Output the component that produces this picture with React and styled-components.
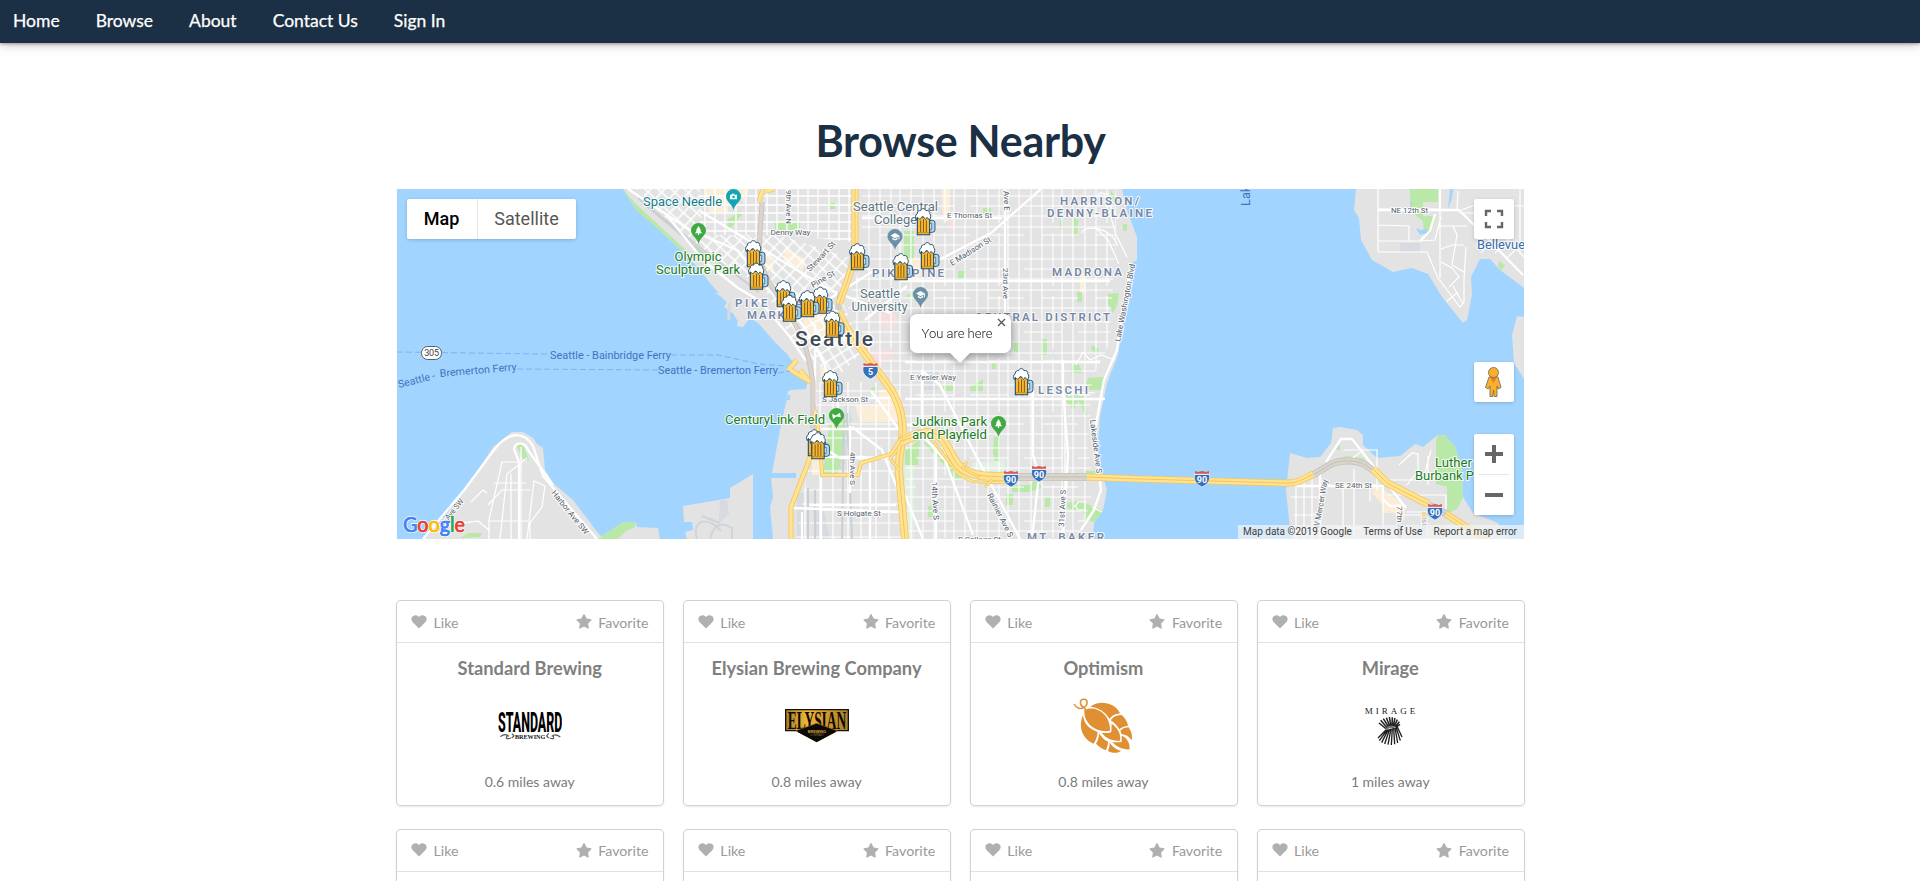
import React from "react";
import styled, { createGlobalStyle } from "styled-components";

const GlobalStyle = createGlobalStyle`
  * { box-sizing: border-box; }
  html, body { margin: 0; height: 881px; overflow: hidden; }
  body { background: #fff; font-family: Lato, "Liberation Sans", sans-serif; }
`;

const Nav = styled.nav`
  display: flex;
  align-items: center;
  gap: 36px;
  height: 43px;
  padding: 0 13px 2px;
  background: #1b3045;
  box-shadow: 0 1px 3px rgba(60, 20, 30, 0.4), 0 3px 10px rgba(0, 0, 0, 0.16);
`;
const NavLink = styled.a`
  color: #fff;
  font-size: 17.5px;
  line-height: 24px;
  white-space: nowrap;
  -webkit-text-stroke: 0.25px #fff;
`;
const Main = styled.main`
  width: 1127px;
  margin: 0 0 0 397px;
  padding-top: 70px;
`;
const Heading = styled.h1`
  margin: 0;
  height: 76px;
  color: #1b3045;
  font-size: 43px;
  line-height: 56px;
  font-weight: 700;
  letter-spacing: -0.3px;
  text-align: center;
`;
const MapFrame = styled.section`
  position: relative;
  height: 350px;
  overflow: hidden;
  font-family: Roboto, sans-serif;
  background: #a1d4ff;
`;
const MapSvg = styled.svg`
  display: block;
  font-family: Roboto, sans-serif;
`;
const TypeSwitch = styled.div`
  position: absolute;
  left: 10px;
  top: 10px;
  display: flex;
  height: 40px;
  border-radius: 2px;
  background: #fff;
  box-shadow: 0 1px 4px -1px rgba(0, 0, 0, 0.3);
`;
const TypeButton = styled.div`
  width: ${(p) => p.$width}px;
  padding-right: 1px;
  line-height: 40px;
  text-align: center;
  font-size: 18px;
  font-weight: ${(p) => (p.$active ? 500 : 400)};
  color: ${(p) => (p.$active ? "#000" : "#565656")};
  & + & { border-left: 1px solid #e6e6e6; }
`;
const Control = styled.div`
  position: absolute;
  right: 10px;
  top: ${(p) => p.$top}px;
  width: 40px;
  height: ${(p) => p.$height || 40}px;
  background: #fff;
  border-radius: 2px;
  box-shadow: 0 1px 4px -1px rgba(0, 0, 0, 0.3);
  svg { display: block; }
`;
const Attribution = styled.div`
  position: absolute;
  right: 0;
  bottom: 0;
  display: flex;
  justify-content: space-between;
  width: 286px;
  height: 14px;
  padding: 0 7px 0 5px;
  background: rgba(240, 243, 245, 0.75);
  color: #3f3f3f;
  font-size: 10px;
  line-height: 14px;
  white-space: nowrap;
`;
const InfoWindow = styled.div`
  position: absolute;
  left: 513px;
  top: 125px;
  width: 101px;
  height: 39px;
  padding-left: 11.5px;
  border-radius: 7px;
  background: #fff;
  color: #222;
  font-size: 13px;
  font-weight: 300;
  line-height: 39px;
  filter: drop-shadow(0 2px 4px rgba(0, 0, 0, 0.4));
  &::after {
    content: "";
    position: absolute;
    left: 39px;
    top: 38px;
    border: 11px solid transparent;
    border-bottom: 0;
    border-top-color: #fff;
  }
`;
const CloseIcon = styled.svg`
  position: absolute;
  right: 5px;
  top: 4px;
`;
const CardGrid = styled.section`
  display: grid;
  grid-template-columns: repeat(4, 1fr);
  gap: 24.5px 20.4px;
  margin-top: 62px;
`;
const Card = styled.article`
  height: 204px;
  border-radius: 4px;
  background: #fff;
  box-shadow: 0 1px 3px 0 #d4d4d5, 0 0 0 1px #d0d0d1;
`;
const CardHeader = styled.header`
  display: flex;
  justify-content: space-between;
  align-items: center;
  height: 42px;
  padding: 2px 15px 0 14px;
  border-bottom: 1px solid #e1e1e1;
`;
const Action = styled.span`
  display: flex;
  align-items: center;
  gap: 6.5px;
  color: #999;
  font-size: 14.2px;
  line-height: 20px;
  svg { display: block; margin-top: -2px; fill: #b0b0b0; }
`;
const CardBody = styled.div`
  display: flex;
  flex-direction: column;
  align-items: center;
  padding: 13px 1px 0 0;
`;
const CardTitle = styled.h2`
  margin: 0;
  color: #7f7f7f;
  font-size: 18.3px;
  line-height: 24px;
  font-weight: 700;
`;
const LogoSvg = styled.svg`
  display: block;
  margin: 14px 0;
`;
const Distance = styled.p`
  margin: 0;
  color: #7b7b7b;
  font-size: 14px;
  line-height: 20px;
`;

/* ---------- Map geometry ---------- */

const land = {
  seattle:
    "M623 189L637 208L663 233L683 252L700 270L710 283L727 303L723 297L727 303L737 320L750 318L758 323L773 340L787 354L793 362L787 370L808 381L806 389L790 390L790 400L786 402L780 430L772 473L796 473V478H771L773 497L770 507L773 539H1093L1094 523L1103 510L1107 490L1102 473L1097 453L1100 417L1107 383L1118 355L1123 323L1130 293L1132 263L1137 260V237L1127 210L1122 189Z",
  waterfront: "M711 281L726 287L723 293H715L728 301L724 307L738 317L737 326L743 327L750 318Z M788 391H803V395H787V400H803V408H786Z",
  harborIsland: "M753 474V539H687L685 532L693 530L692 522H684L683 506L730 498V488Z",
  harbor: "M598 539L623 522H635L637 527L658 528L660 539Z",
  westSeattle:
    "M422 539L440 523L467 487L493 447L512 432H523L533 438L537 444L543 448L545 470L553 483L573 500L598 533L604 539Z",
  bellevue:
    "M1356 189L1354 210L1359 218L1361 240L1372 260L1393 272L1412 268L1428 274L1442 297L1463 323L1467 320L1472 295L1471 277L1480 259H1490L1500 270L1524 288V189Z",
  eastShore: "M1524 317L1517 316L1512 335L1514 363L1524 379Z",
  mercer:
    "M1291 539L1286 490L1290 453L1307 458L1320 457L1331 443L1333 428L1340 427L1357 430L1363 435V445L1377 458L1400 456L1415 444L1423 447L1438 435H1445L1455 447L1462 470L1463 497L1473 513L1498 523L1508 539Z",
};

const parks = [
  "M622 189L637 205L664 230L689 253L682 251L661 232L636 210Z",
  "M689 241L710 256L704 257L692 248Z", "M728 219L740 211L742 214L731 228H727Z",
  "M775 222H800V228L786 233H775Z", "M829 203H835V209H829Z", "M904 231H914V259H904Z",
  "M829 425L847 420L844 450L838 473H823L826 450Z", "M871 388L875 387L878 391H871Z",
  "M983 208H991V213H983Z", "M1060 220H1063V229H1060Z", "M1073 218L1078 220L1077 237L1074 235Z",
  "M1110 190L1121 203L1112 200Z", "M1123 224H1127V231H1123Z", "M958 271H966L963 279H958Z",
  "M1077 292H1082V302H1077Z", "M1108 294L1119 293L1117 305L1113 313L1108 304Z",
  "M1014 341H1020V353H1014Z", "M1041 339H1047V355H1041Z", "M1092 345L1099 349L1097 355L1091 349Z",
  "M907 295L915 290L912 297H907Z", "M943 385H953V391H943Z", "M970 387L983 379V391H970Z",
  "M992 362H996V369H992Z", "M1072 366L1078 363L1083 373H1071Z", "M1088 378L1104 377V390H1090L1085 386Z",
  "M1064 395L1084 396L1087 418L1078 400L1074 410L1065 400Z", "M994 437H1000V461H995L993 453Z",
  "M905 451L920 439L918 465H905Z", "M922 441L935 447L946 462L965 479H955L942 463Z",
  "M1006 494H1013V505H1006Z", "M1012 485H1029L1036 480L1043 488L1028 492H1012Z",
  "M1045 497H1050V507H1045Z", "M1067 503L1081 501L1103 511L1094 522L1087 520L1083 512L1067 508Z",
  "M928 506L933 505V517H928Z", "M1085 471H1102V475H1085Z",
  "M598 539L623 522H635V527L626 531L618 539Z", "M516 445L523 444L529 460L523 459Z",
  "M460 538L469 533H482L480 537Z",
  "M1410 189H1438V202H1423V216H1435V221L1430 234L1424 233L1423 221L1410 211Z",
  "M1499 261L1505 265L1501 271L1498 266Z", "M1337 447L1340 444V450H1336Z",
  "M1332 462L1345 456L1363 458L1370 466L1361 462L1346 460Z",
  "M1436 440L1438 435H1445L1455 447L1462 470L1463 497L1458 508L1447 514V487L1436 484Z",
  "M1319 504L1323 502V508L1318 515Z",
];

const paleParks = ["M904 463H914V487L905 495Z", "M907 490L914 482V539H907Z", "M972 463L1005 460L1004 471H976Z", "M1445 524L1468 525L1486 539H1449Z"];

const beige = [
  "M705 189H730L728 212H709Z", "M738 189H749L744 204Z", "M785 248L805 259L803 271L784 260Z",
  "M759 243L770 253L775 275L765 266Z", "M787 281L799 297L794 305L786 296Z", "M802 318L827 312L840 327L836 344L812 348Z",
  "M855 405H879V390H900V422H860Z", "M820 365L835 372V384H821Z", "M902 254L922 259L920 281L905 280Z",
  "M812 452H819V475H812Z", "M1374 483L1392 496L1406 505L1404 521L1393 513L1382 513L1383 505L1372 493Z",
  "M942 189H950V221H943Z", "M1080 273H1085V293H1080Z",
];
const pink = ["M865 350H891L893 357L880 365H870Z", "M876 315L892 307L900 324L884 330Z", "M949 219H955V230H949Z"];
const gray = [
  "M846 398L852 420L848 455L842 470H838Z M797 493H804V539H797Z M813 507H823L830 539H817Z",
  "M728 304L731 302L730 320H727Z M720 500H727L729 514L719 523Z", "M1400 243H1420V252H1400Z", "M924 372H938V390H924Z",
];

const eastRegion = "M862 189H1116L1116 240L1112 300L1109 345L1092 378L1088 452L1094 486L1080 539H907L905 440L890 386L862 345L847 305L862 260Z";
const nwRegion = "M700 189H853V242L815 238L780 235H700Z";
const diagonalRegion = "M637 189H700L702 235H780L850 258L840 292L798 316L762 286L690 244Z";
const downtownRegion = "M763 286L798 316L840 297L864 350L835 380L807 354L790 337Z";
const southRegion = "M814 382H888L898 440L902 539H796L808 466Z";

const minorRoads = [
  "M489 539V520L502 462H520M500 539L507 474L527 458M511 539V474M521 539V447M527 539L534 481L545 486L542 507L530 523V539M488 505L502 490H530M494 483H526M488 521H528M471 502L483 490L487 493M430 528L478 521L490 531",
  "M1378 189V252M1378 209H1438M1378 225L1409 226V241H1378M1378 241H1420L1435 240L1441 217M1378 252H1427L1438 278L1460 307L1464 302V280L1466 247M1440 226H1467M1440 189V278M1453 226L1457 235L1452 265L1464 272M1441 249L1452 245H1464M1441 262L1452 268L1459 277L1449 287M1447 301L1457 293L1463 304M1457 293L1453 286M1458 191L1457 209L1461 213H1475L1498 227L1505 237L1513 245L1524 257M1461 210L1475 205L1524 206M1481 253L1499 230M1495 253L1514 234M1508 257L1524 241M1520 254V189",
  "M1296 484V539M1304 482V539M1312 480V539M1320 485V539M1343 484V539M1354 469V539M1291 497H1320M1294 515H1321M1297 529H1321M1344 450H1377V490M1348 462L1363 450M1370 488V501M1383 495V539M1399 465L1412 453L1418 454V480H1387M1407 485L1417 472M1423 480L1431 450M1428 485V456M1388 495H1446V512H1407M1400 515H1425V539M1337 528H1379",
  "M1082 233C1082 225 1110 225 1118 246M1095 227L1108 240L1119 264M1109 210L1116 235L1127 257M1103 193L1118 219M1087 207L1100 193L1109 194M1076 365L1083 352L1090 360L1101 355L1115 360M1075 507L1078 502H1085V510H1078L1074 505M1092 507L1102 512M1065 387V520M1068 396L1078 392L1095 393",
];

const mainRoads = [
  "M423 539L465 489L494 450C508 431 524 431 533 446L543 476L597 539M519 539V462L514 449C516 441 525 442 528 450L553 485",
  "M1378 210H1459L1484 235L1523 275M1440 189V211M1435 214L1430 231L1420 241M1326 462L1341 439H1352L1374 467L1385 481L1406 508M1320 470V539M1297 486H1383V499L1390 506H1404",
  "M1005 189V345M991 233L1041 189M900 280L991 233M865 320L907 286M862 218H1002M900 281H1110M922 370V435L945 460L973 535M921 370L940 385L973 450L1020 539M905 399H1105M905 495L923 539M1033 385V455L1039 475L1032 539M1063 360V390L1068 455L1063 539M1081 530L1094 510L1101 490L1099 474L1095 430L1104 380L1117 350L1124 300L1132 265M905 362H1100M936 446V539M907 425H924",
  "M812 441L840 458H889M807 457H866M852 427L882 450L898 490M871 391L898 428M700 211L830 290L890 313M799 318L875 270M815 324V405M822 398H898M838 397V425M820 429H900M850 426V493M792 508L906 512M870 458V539M821 478V539M802 512V539M809 505H896",
  "M628 189L690 230L737 250L768 289L803 325L825 365L830 399M664 212L704 261L738 288L760 301L790 337L806 361",
];

const yellowRoads = [
  { d: "M855 189V245C855 263 847 282 839 304", w: 7 },
  { d: "M839 312C845 330 860 347 869 359C878 375 898 390 902 420C905 440 898 450 899 472L905 539", w: 8 },
  { d: "M815 410L820 440L822 475H858L861 463L891 454L903 435", w: 4 },
  { d: "M813 447L808 463L791 507V539", w: 5 },
  { d: "M900 442L920 434C944 426 947 451 958 465C971 478 988 476 1013 477", w: 9 },
  { d: "M900 440C920 423 930 436 936 445L953 467C966 487 985 482 1013 482", w: 3 },
  { d: "M1087 477L1140 479L1284 483C1298 484 1305 478 1313 474", w: 7 },
  { d: "M1373 469L1387 483L1428 504", w: 8 },
  { d: "M1446 514L1485 539", w: 7 },
  { d: "M763 189L759 201M766 191L774 189M797 360L789 369L802 377L809 381L800 370", w: 5 },
  { d: "M967 461L963 468L980 478M985 487L993 479M897 450L890 459L900 470M1424 512V524", w: 3 },
];
const tunnels = [
  { d: "M762 202C762 215 758 240 760 258C764 280 777 292 789 314C806 340 809 357 813 383V429", w: 5 },
  { d: "M1013 477H1087", w: 8 },
  { d: "M1313 475C1329 466 1332 461 1346 461C1360 460 1366 465 1374 471", w: 7 },
  { d: "M1429 505L1447 514", w: 7 },
  { d: "M841 292L838 310", w: 6 },
];

const pins = [
  { x: 733.5, y: 198, color: "#12a5b3", kind: "camera" },
  { x: 698.5, y: 232, color: "#3faa42", kind: "tree" },
  { x: 895, y: 238, color: "#6b91a7", kind: "school" },
  { x: 920.5, y: 296, color: "#6b91a7", kind: "school" },
  { x: 836.5, y: 417, color: "#3faa42", kind: "field" },
  { x: 998.5, y: 425, color: "#3faa42", kind: "tree" },
];
const pinGlyphs = {
  camera: "M-4 -2H-2V-3H1V-2H4V3H-4Z M0 -1A1.5 1.5 0 1 0 0.1 -1",
  tree: "M0 -5L3 0H1.8L4 3H0.7V5H-0.7V3H-4L-1.8 0H-3Z",
  school: "M-5 -1L0 -4L5 -1V3H4V0L0 2Z M-3 1V3L0 4.5L3 3V1L0 3Z",
  field: "M-5 -2L-1 0L4 -3L5 2L0 1L-4 4Z",
};

const mugs = [
  [745, 240], [748, 262.5], [775, 280], [812, 286.5], [799, 290], [781, 294.5], [824, 310.5], [849, 243],
  [892.5, 253], [915, 208], [919, 242], [822, 370], [806, 429], [809.5, 432], [1013, 368],
];
const shields = [[870.5, 371, "5"], [1011, 479, "90"], [1039, 474, "90"], [1202, 479, "90"], [1435, 512, "90"]];

const places = [
  { t: "Space Needle", x: 643, y: 205.5, w: 79, s: 13, c: "#127e8e" },
  { t: "Olympic", x: 674.5, y: 260.5, w: 47, s: 13, c: "#1c7d25" },
  { t: "Sculpture Park", x: 656, y: 273.5, w: 84, s: 13, c: "#1c7d25" },
  { t: "Seattle Central", x: 853, y: 210.5, w: 85, s: 13, c: "#607885" },
  { t: "College", x: 874, y: 223.5, w: 43, s: 13, c: "#607885" },
  { t: "Seattle", x: 860, y: 297.5, w: 40, s: 13, c: "#607885" },
  { t: "University", x: 851.5, y: 311, w: 56, s: 13, c: "#607885" },
  { t: "CenturyLink Field", x: 725, y: 424, w: 100, s: 13, c: "#1c7d25" },
  { t: "Judkins Park", x: 912, y: 425.5, w: 75, s: 13, c: "#1c7d25" },
  { t: "and Playfield", x: 912, y: 438.5, w: 75, s: 13, c: "#1c7d25" },
  { t: "Luther", x: 1435, y: 466.5, w: 37, s: 13, c: "#1c7d25" },
  { t: "Burbank P", x: 1415, y: 479.5, w: 59, s: 13, c: "#1c7d25" },
  { t: "Bellevue", x: 1477, y: 248.5, w: 48, s: 13, c: "#376cb0" },
  { t: "PIKE PLACE", x: 735, y: 307, w: 87, s: 11.5, c: "#7587a5", b: 600 },
  { t: "MARKET", x: 747, y: 319, w: 55, s: 11.5, c: "#7587a5", b: 600 },
  { t: "PIKE/PINE", x: 872, y: 277, w: 72, s: 11.5, c: "#7587a5", b: 600 },
  { t: "HARRISON/", x: 1060, y: 205, w: 79, s: 11.5, c: "#7587a5", b: 600 },
  { t: "DENNY-BLAINE", x: 1047, y: 217, w: 105, s: 11.5, c: "#7587a5", b: 600 },
  { t: "MADRONA", x: 1052, y: 276, w: 70, s: 11.5, c: "#7587a5", b: 600 },
  { t: "CENTRAL DISTRICT", x: 975, y: 321, w: 135, s: 11.5, c: "#7587a5", b: 600 },
  { t: "LESCHI", x: 1038, y: 394, w: 50, s: 11.5, c: "#7587a5", b: 600 },
  { t: "MT. BAKER", x: 1027, y: 541, w: 77, s: 11.5, c: "#7587a5", b: 600 },
  { t: "Seattle", x: 795, y: 345.5, w: 78, s: 21, c: "#3f4b58", b: 500 },
  { t: "Denny Way", x: 770.5, y: 234.5, w: 40, s: 8 },
  { t: "9th Ave N", x: 786, y: 190, w: 34, s: 8, r: 90 },
  { t: "Stewart St", x: 810, y: 272, w: 38, s: 8, r: -47 },
  { t: "Pine St", x: 813, y: 288, w: 26, s: 8, r: -30 },
  { t: "E Thomas St", x: 947, y: 217.5, w: 45, s: 8 },
  { t: "Ave E", x: 1003.5, y: 191, w: 20, s: 8, r: 88 },
  { t: "23rd Ave", x: 1003, y: 268, w: 31, s: 8, r: 90 },
  { t: "E Madison St", x: 952, y: 266, w: 47, s: 8, r: -32 },
  { t: "E Yesler Way", x: 910, y: 380, w: 46, s: 8 },
  { t: "S Jackson St", x: 822, y: 401.5, w: 46, s: 8 },
  { t: "4th Ave S", x: 849.5, y: 452, w: 33, s: 8, r: 90 },
  { t: "S Holgate St", x: 837, y: 515.5, w: 44, s: 8 },
  { t: "14th Ave S", x: 931.5, y: 482, w: 38, s: 8, r: 87 },
  { t: "Rainier Ave S", x: 987, y: 495, w: 48, s: 8, r: 63 },
  { t: "31st Ave S", x: 1064, y: 527, w: 37, s: 8, r: -87 },
  { t: "Lakeside Ave S", x: 1090, y: 420, w: 54, s: 8, r: 83 },
  { t: "S College St", x: 958, y: 541.5, w: 43, s: 8 },
  { t: "Lake Washington Blvd", x: 1120, y: 342, w: 79, s: 8, r: -79 },
  { t: "NE 12th St", x: 1391, y: 212.5, w: 37, s: 8 },
  { t: "SE 24th St", x: 1335, y: 488, w: 37, s: 8 },
  { t: "W Mercer Way", x: 1319, y: 529, w: 50, s: 8, r: -80 },
  { t: "77th Ave", x: 1397, y: 506, w: 32, s: 8, r: 90 },
  { t: "Island", x: 1422, y: 517, w: 21, s: 8, r: 90, c: "#a0a5a9" },
  { t: "Harbor Ave SW", x: 551, y: 493, w: 54, s: 8, r: 51 },
  { t: "Alki Ave SW", x: 440, y: 531, w: 38, s: 8, r: -51 },
];
const waterLabels = [
  { t: "Seattle - Bainbridge Ferry", x: 550, y: 359, w: 121, s: 10.5, c: "#4572c0" },
  { t: "Seattle - Bremerton Ferry", x: 658, y: 373.5, w: 120, s: 10.5, c: "#4572c0" },
  { t: "Seattle - ", x: 399, y: 388, w: 38, s: 10.5, c: "#4572c0", r: -14 },
  { t: "Bremerton Ferry", x: 440, y: 377, w: 77, s: 10.5, c: "#4572c0", r: -5 },
  { t: "Lake", x: 1250, y: 206, w: 27, s: 13, c: "#4572c0", r: -90 },
];

const MapLabel = ({ item, halo }) => (
  <text
    x={item.x}
    y={item.y}
    fontSize={item.s}
    fontWeight={item.b || 400}
    fill={item.c || "#56616b"}
    stroke={halo ? "rgba(255,255,255,.85)" : "none"}
    strokeWidth={item.s > 15 ? 3 : 2.2}
    strokeLinejoin="round"
    paintOrder="stroke"
    textLength={item.w}
    lengthAdjust={item.b ? "spacing" : "spacingAndGlyphs"}
    transform={item.r ? `rotate(${item.r} ${item.x} ${item.y})` : undefined}
  >
    {item.t}
  </text>
);

const Highway = ({ d, w, casing, fill, line }) => (
  <g fill="none" strokeLinejoin="round">
    <path d={d} stroke={casing} strokeWidth={w} />
    <path d={d} stroke={fill} strokeWidth={w - 1.6} />
    {w > 5 && <path d={d} stroke={line} strokeWidth="1" />}
  </g>
);

const Pin = ({ x, y, color, kind }) => (
  <g transform={`translate(${x} ${y})`}>
    <path d="M0 12C-1 6 -7.5 4 -7.5 -1.5A7.5 7.5 0 0 1 7.5 -1.5C7.5 4 1 6 0 12Z" fill={color} />
    <path d={pinGlyphs[kind]} fill="#fff" fillRule="evenodd" transform="translate(0 -1.5) scale(.88)" />
  </g>
);

const Mug = ({ x, y }) => (
  <g transform={`translate(${x} ${y}) scale(.3333)`} strokeLinejoin="round">
    <path d="M43 37H53Q60 37 60 45V65Q60 73 52 73H43" fill="#afd5ef" stroke="#1b4869" strokeWidth="2.6" />
    <path d="M44 46H50V64H44" fill="#fff" stroke="#1b4869" strokeWidth="2" />
    <path d="M7 27H44V80H7Z" fill="#f8b830" stroke="#1b4869" strokeWidth="3.2" />
    <path d="M9 74H42" stroke="#a8741d" strokeWidth="2" />
    <path d="M17 38V72M25.5 34V72M34 37V72" stroke="#6b4a1c" strokeWidth="2.6" />
    <path d="M4 35C1 29 0 20 7 17C6 9 13 7 17 8C18 0 31 0 33 8C41 6 46 11 44 17C49 20 48 30 43 36C40 31 38 29 35 29C33 37 28 34 28 29C23 24 20 25 18 31C13 37 10 30 7 28Z" fill="#fff" stroke="#1b4869" strokeWidth="2.8" />
  </g>
);

const Shield = ({ x, y, n }) => (
  <g transform={`translate(${x} ${y})`}>
    <path d="M-7 -5H7C9 1 6 5 0 8C-6 5 -9 1 -7 -5Z" fill="#3570be" stroke="#fff" strokeWidth=".6" />
    <path d="M-7 -8L-4 -7L0 -8L4 -7L7 -8V-4.8H-7Z" fill="#d55b50" />
    <path d="M-7.5 -4.7H7.5" stroke="#fff" />
    <text y="4.2" textAnchor="middle" fill="#fff" fontSize="9" fontWeight="700">{n}</text>
  </g>
);

const CityMap = () => (
  <MapSvg width="1127" height="350" viewBox="397 189 1127 350">
    <defs>
      <pattern id="eastGrid" width="54" height="63" patternUnits="userSpaceOnUse" x="862" y="189">
        <path d="M7 0V63M18 0V63M29 0V34M29 44V63M38 0V63M49 0V63M0 7H54M0 17H38M0 27H54M0 38H54M18 46H54M0 56H54" stroke="#fff" strokeWidth="1.1" fill="none" />
      </pattern>
      <pattern id="northGrid" width="31" height="26" patternUnits="userSpaceOnUse" x="700" y="189">
        <path d="M5 0V26M15 0V26M25 0V26M0 7H31M0 16H31M0 24H31" stroke="#fff" strokeWidth="1.3" />
      </pattern>
      <pattern id="diagonalGrid" width="10" height="9" patternUnits="userSpaceOnUse" patternTransform="rotate(43)">
        <path d="M5 0V9M0 4.5H10" stroke="#fff" strokeWidth="1.5" />
      </pattern>
      <pattern id="downtownGrid" width="10" height="9" patternUnits="userSpaceOnUse" patternTransform="rotate(58)">
        <path d="M5 0V9M0 4.5H10" stroke="#fff" strokeWidth="1.5" />
      </pattern>
      <pattern id="southGrid" width="28" height="33" patternUnits="userSpaceOnUse" x="814" y="382">
        <path d="M6 0V33M19 0V33M0 9H28M0 23H28" stroke="#fff" strokeWidth="1.2" />
      </pattern>
    </defs>
    <rect x="397" y="189" width="1127" height="350" fill="#a1d4ff" />
    {Object.entries(land).map(([name, d]) => <path key={name} d={d} fill="#e3e3e3" />)}
    {beige.map((d) => <path key={d} d={d} fill="#fbeed9" />)}
    {pink.map((d) => <path key={d} d={d} fill="#f3dfe0" />)}
    {gray.map((d) => <path key={d} d={d} fill="#d7dade" />)}
    {paleParks.map((d) => <path key={d} d={d} fill="#e2f0e2" />)}
    {parks.map((d) => <path key={d} d={d} fill="#b9e8a9" />)}
    <path d="M1416 228L1421 230L1427 229V233L1420 235ZM1450 189H1453L1452 198L1448 209ZM1410 201L1413 204L1410 205Z" fill="#a1d4ff" />
    <path d={eastRegion} fill="url(#eastGrid)" />
    <path d={nwRegion} fill="url(#northGrid)" />
    <path d={diagonalRegion} fill="url(#diagonalGrid)" />
    <path d={downtownRegion} fill="url(#downtownGrid)" />
    <path d={southRegion} fill="url(#southGrid)" />
    <path d="M638 198L707 253L759 292M642 202L710 259M808 488V539M815 490V539M844 415L842 539M847 413L852 539" fill="none" stroke="#cbcfd4" strokeWidth="2" />
    <path d="M697 539C691 520 708 515 721 531M702 516L720 523M710 539Q715 518 732 528V539" fill="none" stroke="#d0d4da" strokeWidth="2" />
    {minorRoads.map((d) => <path key={d} d={d} fill="none" stroke="#fff" strokeWidth="1.2" />)}
    {mainRoads.map((d) => <path key={d} d={d} fill="none" stroke="#fff" strokeWidth="2.3" strokeLinejoin="round" />)}
    {tunnels.map((r) => <Highway key={r.d} {...r} casing="#c7c2b9" fill="#dad5cc" line="#c4bfb5" />)}
    {yellowRoads.map((r) => <Highway key={r.d} {...r} casing="#f1c75e" fill="#ffe393" line="#f1c55c" />)}
    <path d="M397 352L545 354H550M671 355H718L759 364L787 366M517 369L658 370M778 373L790 371" fill="none" stroke="#7fb4ee" strokeWidth="1" strokeDasharray="6 3" />
    {waterLabels.map((l) => <MapLabel key={l.t + l.x} item={l} />)}
    {places.map((l) => <MapLabel key={l.t + l.x} item={l} halo />)}
    <rect x="421.5" y="346.5" width="20" height="13" rx="6.2" fill="#fff" stroke="#555f68" />
    <text x="431.5" y="356.2" fontSize="9" textAnchor="middle" fill="#444" letterSpacing="-.2">305</text>
    {pins.map((p) => <Pin key={p.x} {...p} />)}
    {shields.map(([x, y, n]) => <Shield key={x} x={x} y={y} n={n} />)}
    {mugs.map(([x, y]) => <Mug key={x} x={x} y={y} />)}
    <text x="403" y="531.5" fontFamily="Lato" fontSize="22" fontWeight="400" textLength="62" lengthAdjust="spacingAndGlyphs" stroke="#fff" strokeWidth="2.2" paintOrder="stroke">
      <tspan fill="#4285f4">G</tspan><tspan fill="#ea4335">o</tspan><tspan fill="#fbbc05">o</tspan><tspan fill="#4285f4">g</tspan><tspan fill="#34a853">l</tspan><tspan fill="#ea4335">e</tspan>
    </text>
    <text x="403" y="531.5" fontFamily="Lato" fontSize="22" fontWeight="400" textLength="62" lengthAdjust="spacingAndGlyphs" strokeWidth=".7" aria-hidden="true">
      <tspan fill="#4285f4" stroke="#4285f4">G</tspan><tspan fill="#ea4335" stroke="#ea4335">o</tspan><tspan fill="#fbbc05" stroke="#fbbc05">o</tspan><tspan fill="#4285f4" stroke="#4285f4">g</tspan><tspan fill="#34a853" stroke="#34a853">l</tspan><tspan fill="#ea4335" stroke="#ea4335">e</tspan>
    </text>
  </MapSvg>
);

/* ---------- Brewery logos ---------- */

const StandardLogo = () => (
  <LogoSvg width="64" height="64" viewBox="323 312 192 192">
    <text x="323" y="427" fontFamily="Roboto" fontWeight="800" fontSize="85" textLength="193" lengthAdjust="spacingAndGlyphs">STANDARD</text>
    <text x="374" y="446" fontFamily="Liberation Serif" fontWeight="700" fontSize="21" textLength="91" lengthAdjust="spacingAndGlyphs" fill="#111">BREWING</text>
    <path d="M330 440Q345 428 356 439M351 437Q342 450 362 444M365 431L371 438L364 444M484 439Q494 429 510 441M488 437Q495 450 478 444M475 430L469 438L475 444" fill="none" stroke="#555" strokeWidth="3.5" />
  </LogoSvg>
);

const ElysianLogo = () => (
  <LogoSvg width="64" height="64" viewBox="345 312 192 192">
    <defs>
      <linearGradient id="gold"><stop stopColor="#a98425" /><stop offset=".35" stopColor="#f2b63c" /><stop offset=".65" stopColor="#d5992b" /><stop offset="1" stopColor="#a58231" /></linearGradient>
    </defs>
    <path d="M345 357H537V424H500L440 456L380 424H345Z" fill="#171209" />
    <path d="M349 361H533V420H349Z" fill="url(#gold)" />
    <text x="353" y="417" fontFamily="Liberation Serif" fontWeight="700" fontSize="76" textLength="176" lengthAdjust="spacingAndGlyphs" fill="#0d0903">ELYSIAN</text>
    <path d="M378 422L440 400L502 422L440 456Z" fill="#0d0a06" stroke="#a47b29" strokeWidth="1.5" />
    <path d="M384 424L440 453L496 424" fill="none" stroke="#0d0a06" strokeWidth="5" />
    <text x="413" y="428" fontFamily="Liberation Sans" fontWeight="700" fontSize="13" textLength="55" lengthAdjust="spacingAndGlyphs" fill="#d8a443">BREWING</text>
    <text x="421" y="438" fontFamily="Liberation Sans" fontSize="8" textLength="40" fill="#8b6d31">COMPANY</text>
  </LogoSvg>
);

const OptimismLogo = () => (
  <LogoSvg width="64" height="64" viewBox="337 312 192 192" fill="#e08f32">
    <path d="M346 342C353 355 366 359 376 352C391 343 386 326 374 328C361 330 363 347 377 354L382 360" fill="none" stroke="#e08f32" strokeWidth="4.5" />
    <path d="M377 360C404 345 455 365 454 422C417 430 374 404 377 360Z" />
    <path d="M395 350C421 330 467 336 484 370C469 373 460 376 453 387C440 365 420 353 395 350Z" />
    <path d="M373 376C376 400 388 416 417 426C416 441 411 452 405 461C375 450 356 413 373 376Z" />
    <path d="M456 391C466 377 478 375 489 375C500 384 506 396 508 407C497 408 488 412 482 418C476 408 468 399 456 391Z" />
    <path d="M459 401C479 415 488 434 484 452C462 453 443 446 429 428C443 430 452 429 458 426Z" />
    <path d="M485 422C493 414 500 413 510 412C519 427 522 437 519 451C511 440 501 433 489 433Z" />
    <path d="M421 429C429 444 440 451 448 455C448 465 445 474 441 481C427 475 417 467 412 461C419 450 421 440 421 429Z" />
    <path d="M489 437C503 442 514 456 513 478C494 480 473 470 461 456C474 458 485 457 489 455Z" />
    <path d="M453 458C462 471 473 478 487 483C475 492 456 489 448 482C451 474 453 467 453 458Z" />
  </LogoSvg>
);

const MirageLogo = () => (
  <LogoSvg width="64" height="64" viewBox="328 312 192 192">
    <text x="348" y="371" fontFamily="Liberation Serif" fontSize="27" textLength="152" fill="#222">MIRAGE</text>
    <path d="M391 399L413 417M396 391L417 415M404 386L421 413M413 383L424 411M422 381L427 410M431 382L430 410M439 384L433 410M446 389L436 410M452 395L440 410M454 403L443 411" fill="none" stroke="#222" strokeWidth="4.6" />
    <path d="M412 420L388 444M416 419L392 452M419 418L399 458M423 417L408 462M427 416L418 464M431 415L428 465M435 414L438 463M439 413L447 459M442 411L455 452M445 409L460 441" fill="none" stroke="#1d1d1d" strokeWidth="4" />
    <path d="M412 418L422 411L430 410L438 411" fill="none" stroke="#777" strokeWidth="6" />
  </LogoSvg>
);

const breweries = [
  { name: "Standard Brewing", distance: "0.6 miles away", Logo: StandardLogo },
  { name: "Elysian Brewing Company", distance: "0.8 miles away", Logo: ElysianLogo },
  { name: "Optimism", distance: "0.8 miles away", Logo: OptimismLogo },
  { name: "Mirage", distance: "1 miles away", Logo: MirageLogo },
];

const HeartIcon = () => (
  <svg width="16" height="14" viewBox="0 0 16 14"><path d="M8 13.5L1.5 7C-.3 5 .1 2 2.2 .9C4.2 -.2 6.4 .2 8 2C9.6 .2 11.8 -.2 13.8 .9C15.9 2 16.3 5 14.5 7Z" /></svg>
);
const StarIcon = () => (
  <svg width="16" height="15" viewBox="0 0 16 15"><path d="M7.2 .7Q8 -.5 8.8 .7L10.7 4.6L14.9 5.2Q16 5.6 15.2 6.6L12.1 9.5L12.8 13.7Q12.7 15 11.6 14.5L8 12.5L4.3 14.5Q3.2 15 3.2 13.7L3.9 9.5L.8 6.6Q0 5.6 1.1 5.2L5.3 4.6Z" /></svg>
);

const BreweryCard = ({ brewery }) => (
  <Card>
    <CardHeader>
      <Action><HeartIcon />Like</Action>
      <Action><StarIcon />Favorite</Action>
    </CardHeader>
    {brewery && (
      <CardBody>
        <CardTitle>{brewery.name}</CardTitle>
        <brewery.Logo />
        <Distance>{brewery.distance}</Distance>
      </CardBody>
    )}
  </Card>
);

export default function App() {
  return (
    <>
      <GlobalStyle />
      <Nav>
        {["Home", "Browse", "About", "Contact Us", "Sign In"].map((t) => <NavLink key={t}>{t}</NavLink>)}
      </Nav>
      <Main>
        <Heading>Browse Nearby</Heading>
        <MapFrame>
          <CityMap />
          <TypeSwitch>
            <TypeButton $width={70} $active>Map</TypeButton>
            <TypeButton $width={99}>Satellite</TypeButton>
          </TypeSwitch>
          <InfoWindow>
            You are here
            <CloseIcon width="9" height="9" viewBox="0 0 9 9"><path d="M1 1L8 8M8 1L1 8" stroke="#555" strokeWidth="1.3" /></CloseIcon>
          </InfoWindow>
          <Control $top={10}>
            <svg width="40" height="40"><path d="M12 17V12H17M23 12H28V17M28 23V28H23M17 28H12V23" fill="none" stroke="#666" strokeWidth="2.4" /></svg>
          </Control>
          <Control $top={173}>
            <svg width="40" height="40" fill="#fbb02d" stroke="#79715f" strokeWidth=".9">
              <path d="M15 15Q19.5 13 24 15L27 25.5L24 27L23 24V34.5H20.2L19.5 28L18.8 34.5H16V24L14.5 27L11.5 25.5Z" />
              <path d="M16 15H23L19.5 21Z" fill="#e57b26" stroke="none" />
              <circle cx="19.5" cy="10.5" r="5" />
            </svg>
          </Control>
          <Control $top={245} $height={81}>
            <svg width="40" height="81" stroke="#666" strokeWidth="4"><path d="M11 20H29M20 11V29M11 61H29" /><path d="M5 40.5H35" stroke="#e6e6e6" strokeWidth="1" /></svg>
          </Control>
          <Attribution><span>Map data ©2019 Google</span><span>Terms of Use</span><span>Report a map error</span></Attribution>
        </MapFrame>
        <CardGrid>
          {breweries.map((b) => <BreweryCard key={b.name} brewery={b} />)}
          {[0, 1, 2, 3].map((i) => <BreweryCard key={i} />)}
        </CardGrid>
      </Main>
    </>
  );
}
